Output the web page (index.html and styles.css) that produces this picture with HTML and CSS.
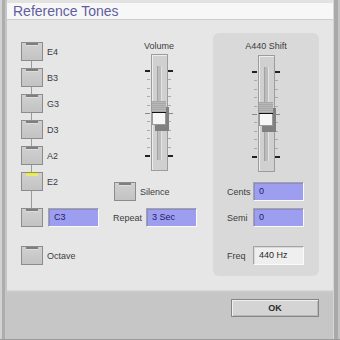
FILE: index.html
```html
<!DOCTYPE html>
<html>
<head>
    <title>Reference Tones</title>
    <meta charset="utf-8">
    <link rel="stylesheet" href="styles.css">
</head>
<body>
    <div class="window">
        <div class="edge edge-left"></div>
        <div class="main">
            <div class="titlebar">Reference Tones</div>

            <div class="content">
                <!-- string buttons -->
                <div class="notes">
                    <div class="note"><span class="key"></span><span>E4</span></div>
                    <div class="link"></div>
                    <div class="note"><span class="key"></span><span>B3</span></div>
                    <div class="link"></div>
                    <div class="note"><span class="key"></span><span>G3</span></div>
                    <div class="link"></div>
                    <div class="note"><span class="key"></span><span>D3</span></div>
                    <div class="link"></div>
                    <div class="note"><span class="key"></span><span>A2</span></div>
                    <div class="link"></div>
                    <div class="note"><span class="key on"></span><span>E2</span></div>
                    <div class="link long"></div>
                    <div class="note"><span class="key"></span><span class="field note-field">C3</span></div>
                    <div class="note octave"><span class="key"></span><span>Octave</span></div>
                </div>

                <!-- volume -->
                <div class="volume">
                    <div class="slider-unit">
                        <div class="slider-label">Volume</div>
                        <div class="slider">
                            <div class="ticks left">
                                <i class="major"></i><i></i><i></i><i></i><i></i><i class="mid"></i><i></i><i></i><i></i><i></i><i class="major"></i>
                            </div>
                            <div class="track">
                                <div class="groove"></div>
                                <div class="thumb"><div class="thumb-top"></div><div class="thumb-face"></div></div>
                            </div>
                            <div class="ticks right">
                                <i class="major"></i><i></i><i></i><i></i><i></i><i class="mid"></i><i></i><i></i><i></i><i></i><i class="major"></i>
                            </div>
                        </div>
                    </div>
                    <div class="row silence"><span class="key"></span><span>Silence</span></div>
                    <div class="row repeat"><span class="row-label repeat-label">Repeat</span><span class="field">3 Sec</span></div>
                </div>

                <!-- A440 shift -->
                <div class="panel">
                    <div class="slider-unit shift">
                        <div class="slider-label">A440 Shift</div>
                        <div class="slider">
                            <div class="ticks left">
                                <i class="major"></i><i></i><i></i><i></i><i></i><i class="mid"></i><i></i><i></i><i></i><i></i><i class="major"></i>
                            </div>
                            <div class="track">
                                <div class="groove"></div>
                                <div class="thumb"><div class="thumb-top"></div><div class="thumb-face"></div></div>
                            </div>
                            <div class="ticks right">
                                <i class="major"></i><i></i><i></i><i></i><i></i><i class="mid"></i><i></i><i></i><i></i><i></i><i class="major"></i>
                            </div>
                        </div>
                    </div>
                    <div class="row cents"><span class="row-label">Cents</span><span class="field">0</span></div>
                    <div class="row semi"><span class="row-label">Semi</span><span class="field">0</span></div>
                    <div class="row freq"><span class="row-label">Freq</span><span class="field plain">440 Hz</span></div>
                </div>
            </div>

            <div class="footer">
                <button class="ok">OK</button>
            </div>
        </div>
        <div class="edge edge-right"></div>
    </div>
</body>
</html>
```

FILE: styles.css
```css
body {
    margin: 0;
    font-family: "Liberation Sans", Arial, sans-serif;
    font-size: 9px;
    color: #3c3c3c;
    background: #e6e6e6;
}
.window {
    display: flex;
    width: 340px;
    height: 340px;
    box-sizing: border-box;
    border-bottom: 1px solid #9c9c9c;
    overflow: hidden;
}
.edge {
    width: 7px;
    flex-shrink: 0;
}
.edge-left {
    background: linear-gradient(to right, #d2d2d2 0 2px, #adadad 2px 5px, #c6c6c6 5px 7px);
}
.edge-right {
    background: linear-gradient(to right, #d6d6d6 0 1px, #a9a9a9 1px 5px, #c4c4c4 5px 7px);
}
.main {
    flex: 1;
    display: flex;
    flex-direction: column;
}
.titlebar {
    height: 20px;
    box-sizing: border-box;
    border-top: 3px solid #e2e2e2;
    border-bottom: 1px solid #cdcdcd;
    background: #f7f7f7;
    padding-left: 6px;
    font-size: 14px;
    line-height: 16px;
    color: #5f5f9f;
}
.content {
    flex: 1;
    display: flex;
    align-items: flex-start;
    gap: 13px;
    padding-left: 14px;
    background: #e6e6e6;
}

/* toggle keys */
.key {
    position: relative;
    display: block;
    flex-shrink: 0;
    width: 22px;
    height: 19px;
    box-sizing: border-box;
    border: 1px solid #8c8c8c;
    background: linear-gradient(#d0d0d0, #c3c3c3);
}
.key::before {
    content: '';
    position: absolute;
    top: 0;
    left: 4px;
    width: 12px;
    height: 2px;
    background: #7e7e7e;
    border-bottom: 1px solid #dedede;
}
.key.on::before {
    background: #f4f400;
}

/* note column */
.notes {
    width: 79px;
    padding-top: 22px;
}
.note {
    display: flex;
    align-items: center;
    gap: 4px;
    height: 19px;
}
.link {
    width: 22px;
    height: 7px;
    background: linear-gradient(#9a9a9a, #9a9a9a) no-repeat 10px 0 / 1px 100%;
}
.link.long {
    height: 17px;
}
.octave {
    margin-top: 19px;
}
.note-field {
    margin-left: 1px;
}

/* fields */
.field {
    display: block;
    width: 51px;
    height: 19px;
    box-sizing: border-box;
    border: 1px solid;
    border-color: #a4a4a4 #fafafa #fafafa #a4a4a4;
    background: #9e9ef0;
    box-shadow: inset 1px 1px #8a8ad0;
    color: #1c1c6c;
    padding-left: 5px;
    line-height: 17px;
}
.field.plain {
    background: #efefef;
    box-shadow: inset 1px 1px #d8d8d8;
    color: #2a2a2a;
}

/* sliders */
.slider-unit {
    display: flex;
    flex-direction: column;
    align-items: center;
    width: 28px;
}
.slider-label {
    white-space: nowrap;
    line-height: 12px;
    margin-bottom: 2px;
}
.shift .slider-label {
    margin-bottom: 3px;
}
.slider {
    display: flex;
    height: 117px;
}
.ticks {
    width: 5px;
    height: 87px;
    margin-top: 16px;
    display: flex;
    flex-direction: column;
    justify-content: space-between;
}
.ticks.left {
    align-items: flex-end;
    margin-right: 1px;
}
.ticks.right {
    align-items: flex-start;
}
.ticks i {
    display: block;
    width: 3px;
    height: 1px;
    background: #ababab;
}
.ticks i.mid {
    width: 5px;
    background: #8a8a8a;
}
.ticks i.major {
    width: 5px;
    height: 2px;
    background: #222;
}
.track {
    position: relative;
    width: 17px;
    height: 117px;
    box-sizing: border-box;
    border: 1px solid #9c9c9c;
    background: #d0d0d0;
    box-shadow: inset 1px 1px #ededed;
}
.groove {
    width: 5px;
    height: 94px;
    box-sizing: border-box;
    margin: 11px 0 0 5px;
    border-left: 1px solid #a2a2a2;
    border-right: 1px solid #e4e4e4;
    background: #bcbcbc;
}
.thumb {
    position: absolute;
    top: 46px;
    left: 0;
    width: 14px;
    box-shadow: 3px 6px 0 #808080;
}
.thumb-top {
    height: 11px;
    background: repeating-linear-gradient(#a8a8a8 0 1px, #b8b8b8 1px 2px);
    border-bottom: 1px solid #111;
}
.thumb-face {
    height: 12px;
    box-sizing: border-box;
    background: #f6f6f6;
    border: 1px solid #9a9a9a;
    border-top: none;
}

/* middle column */
.volume {
    width: 87px;
    padding-top: 20px;
}
.volume .slider-unit {
    margin-left: 32px;
}
.row {
    display: flex;
    align-items: center;
    height: 19px;
}
.silence {
    margin: 11px 0 0 1px;
    gap: 4px;
}
.repeat {
    margin-top: 7px;
}
.row-label {
    width: 26px;
    flex-shrink: 0;
}
.repeat-label {
    width: 33px;
}

/* shift panel */
.panel {
    width: 106px;
    height: 243px;
    box-sizing: border-box;
    margin-top: 13px;
    padding: 7px 0 0 14px;
    border-radius: 6px;
    background: #d9d9d9;
    display: flex;
    flex-direction: column;
}
.panel .slider-unit {
    align-self: center;
    margin-left: -14px;
}
.cents {
    margin-top: 10px;
}
.semi {
    margin-top: 7px;
}
.freq {
    margin-top: 19px;
}

/* footer */
.footer {
    height: 49px;
    box-sizing: border-box;
    display: flex;
    justify-content: flex-end;
    align-items: flex-start;
    padding: 9px 14px 0 0;
    background: linear-gradient(#dedede, #c6c6c6 2px);
}
.ok {
    width: 88px;
    height: 18px;
    padding: 0;
    border: 1px solid #858585;
    background: #d4d4d4;
    box-shadow: inset 1px 1px #f0f0f0, inset -1px -1px #b8b8b8;
    font-family: "Liberation Sans", Arial, sans-serif;
    font-size: 9px;
    font-weight: bold;
    color: #2a2a2a;
}
```
